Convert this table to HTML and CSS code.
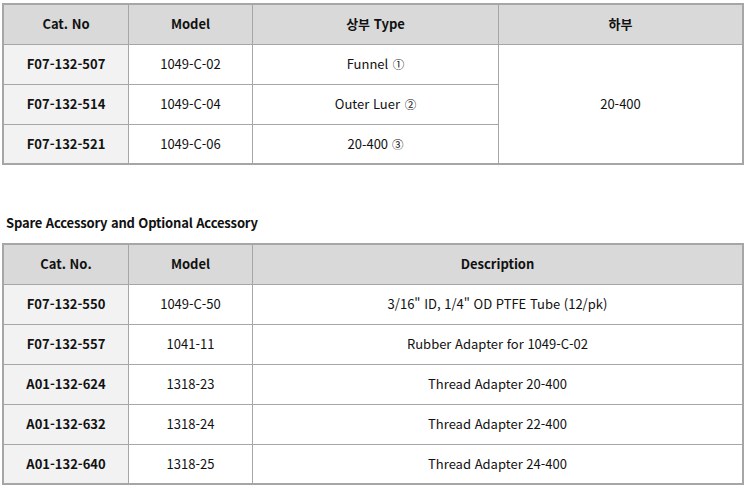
FILE: index.html
```html
<!DOCTYPE html>
<html lang="ko">
<head>
<meta charset="utf-8">
<link rel="stylesheet" href="styles.css">
</head>
<body>
<table class="spec">
  <colgroup>
    <col class="c-cat"><col class="c-model"><col class="c-type"><col class="c-bottom">
  </colgroup>
  <thead>
    <tr>
      <th>Cat. No</th>
      <th>Model</th>
      <th>상부 Type</th>
      <th class="last">하부</th>
    </tr>
  </thead>
  <tbody>
    <tr>
      <td class="cat">F07-132-507</td>
      <td>1049-C-02</td>
      <td>Funnel <span class="num">①</span></td>
      <td class="last span" rowspan="3">20-400</td>
    </tr>
    <tr>
      <td class="cat">F07-132-514</td>
      <td>1049-C-04</td>
      <td>Outer Luer <span class="num">②</span></td>
    </tr>
    <tr class="end">
      <td class="cat">F07-132-521</td>
      <td>1049-C-06</td>
      <td>20-400 <span class="num">③</span></td>
    </tr>
  </tbody>
</table>

<h2 class="title">Spare Accessory and Optional Accessory</h2>

<table class="spec">
  <colgroup>
    <col class="c-cat"><col class="c-model"><col>
  </colgroup>
  <thead>
    <tr>
      <th>Cat. No.</th>
      <th>Model</th>
      <th class="last">Description</th>
    </tr>
  </thead>
  <tbody>
    <tr>
      <td class="cat">F07-132-550</td>
      <td>1049-C-50</td>
      <td class="last">3/16" ID, 1/4" OD PTFE Tube (12/pk)</td>
    </tr>
    <tr>
      <td class="cat">F07-132-557</td>
      <td>1041-11</td>
      <td class="last">Rubber Adapter for 1049-C-02</td>
    </tr>
    <tr>
      <td class="cat">A01-132-624</td>
      <td>1318-23</td>
      <td class="last">Thread Adapter 20-400</td>
    </tr>
    <tr>
      <td class="cat">A01-132-632</td>
      <td>1318-24</td>
      <td class="last">Thread Adapter 22-400</td>
    </tr>
    <tr class="end">
      <td class="cat">A01-132-640</td>
      <td>1318-25</td>
      <td class="last">Thread Adapter 24-400</td>
    </tr>
  </tbody>
</table>
</body>
</html>
```

FILE: styles.css
```css
html, body {
  background: #ffffff;
}
body {
  margin: 3px 2px;
  font-family: "Noto Sans CJK KR", "Noto Sans", sans-serif;
  font-size: 13px;
  color: #111111;
}
.spec {
  width: 742px;
  table-layout: fixed;
  border-collapse: separate;
  border-spacing: 0;
  border: 2px solid #a6a6a6;
}
.c-cat { width: 125px; }
.c-model { width: 124px; }
.c-type { width: 246px; }
.spec th,
.spec td {
  padding: 0 0 1px 0;
  text-align: center;
  vertical-align: middle;
  border-right: 1px solid #a6a6a6;
  border-bottom: 1px solid #a6a6a6;
  height: 38px;
  line-height: 16px;
}
.spec th {
  background: #d9d9d9;
  font-weight: bold;
  color: #111111;
}
.spec td.cat {
  background: #f2f2f2;
  font-weight: bold;
}
.spec .last {
  border-right: none;
}
.spec tr.end td,
.spec td.span {
  border-bottom: none;
  height: 37px;
}
.num {
  font-size: 11.5px;
  margin-left: 1px;
}
.title {
  margin: 48px 0 10px 4px;
  font-size: 13px;
  line-height: 20px;
  font-weight: bold;
  letter-spacing: -0.16px;
  color: #111111;
}
```
